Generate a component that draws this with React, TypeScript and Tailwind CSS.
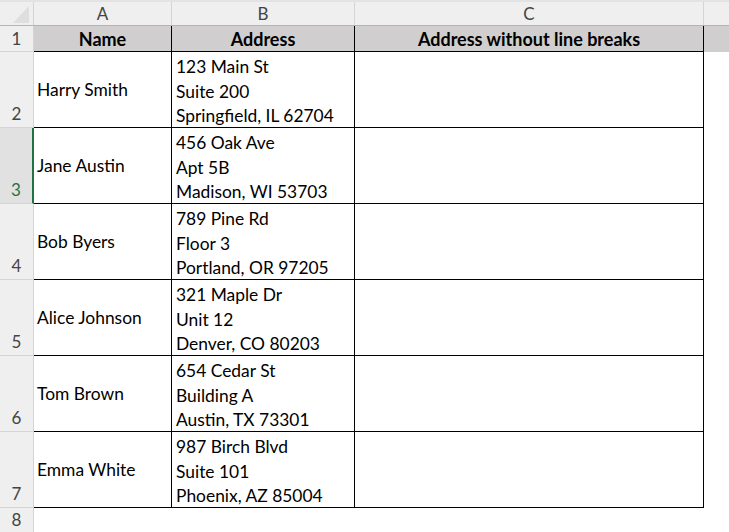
import React from 'react';

const rows = [
  { name: 'Harry Smith', addr: ['123 Main St', 'Suite 200', 'Springfield, IL 62704'] },
  { name: 'Jane Austin', addr: ['456 Oak Ave', 'Apt 5B', 'Madison, WI 53703'] },
  { name: 'Bob Byers', addr: ['789 Pine Rd', 'Floor 3', 'Portland, OR 97205'] },
  { name: 'Alice Johnson', addr: ['321 Maple Dr', 'Unit 12', 'Denver, CO 80203'] },
  { name: 'Tom Brown', addr: ['654 Cedar St', 'Building A', 'Austin, TX 73301'] },
  { name: 'Emma White', addr: ['987 Birch Blvd', 'Suite 101', 'Phoenix, AZ 85004'] },
];

// selected row in the screenshot
const activeRow = 3;

function RowHeader({ n, tall }: { n: number; tall?: boolean }) {
  const active = n === activeRow;
  return (
    <div
      className={
        active
          ? 'w-[34px] shrink-0 flex justify-center items-end bg-[#e1e1e1] border-r-2 border-r-[#217346] border-b border-b-[#d4d4d4] text-[#217346] text-[17px]'
          : 'w-[34px] shrink-0 flex justify-center items-end bg-[#efefef] border-r border-r-[#d4d4d4] border-b border-b-[#d4d4d4] text-[#444] text-[17px]'
      }
    >
      <span className={tall ? 'leading-[24px] pb-[1px]' : 'leading-[24px]'}>{n}</span>
    </div>
  );
}

export default function App() {
  return (
    <div className="w-[729px] h-[532px] overflow-hidden bg-white font-['Lato',sans-serif] text-[17.4px] text-black">
      <div className="h-[2px] bg-[#e3e3e3]" />

      {/* column letters */}
      <div className="flex h-[24px] bg-[#efefef] border-b border-[#b4b4b4] text-[#444] text-[17px]">
        <div className="w-[34px] shrink-0 flex items-end justify-end pr-[4px] pb-[2px] border-r border-[#d4d4d4]">
          <svg width="16" height="17" viewBox="0 0 16 17">
            <polygon points="16,0 16,17 0,17" fill="#dedede" />
          </svg>
        </div>
        <div className="w-[138px] shrink-0 flex items-center justify-center border-r border-[#d4d4d4]">A</div>
        <div className="w-[183px] shrink-0 flex items-center justify-center border-r border-[#d4d4d4]">B</div>
        <div className="w-[349px] shrink-0 flex items-center justify-center border-r border-[#d4d4d4]">C</div>
        <div className="flex-1" />
      </div>

      {/* header row */}
      <div className="flex h-[26px] bg-[#d0cece] font-bold text-[18px]">
        <div className="w-[34px] shrink-0 flex justify-center items-center bg-[#efefef] border-r border-r-[#d4d4d4] border-b border-b-[#d4d4d4] text-[#444] text-[17px] font-normal">
          1
        </div>
        <div className="w-[138px] shrink-0 flex items-center justify-center pt-[2px] border-r border-b border-black">Name</div>
        <div className="w-[183px] shrink-0 flex items-center justify-center pt-[2px] border-r border-b border-black">Address</div>
        <div className="w-[349px] shrink-0 flex items-center justify-center pt-[2px] border-r border-b border-black">
          Address without line breaks
        </div>
        <div className="flex-1" />
      </div>

      {rows.map((r, i) => (
        <div key={r.name} className="flex h-[76px]">
          <RowHeader n={i + 2} tall />
          <div className="w-[138px] shrink-0 flex items-center px-[3px] pt-[1px] border-r border-b border-black">{r.name}</div>
          <div className="w-[183px] shrink-0 px-[4px] pt-[3px] overflow-hidden border-r border-b border-black leading-[24.5px]">
            {r.addr.map((line) => (
              <div key={line} className="whitespace-nowrap">{line}</div>
            ))}
          </div>
          <div className="w-[349px] shrink-0 border-r border-b border-black" />
          <div className="flex-1" />
        </div>
      ))}

      <div className="flex h-[25px]">
        <RowHeader n={8} />
        <div className="flex-1" />
      </div>
    </div>
  );
}
